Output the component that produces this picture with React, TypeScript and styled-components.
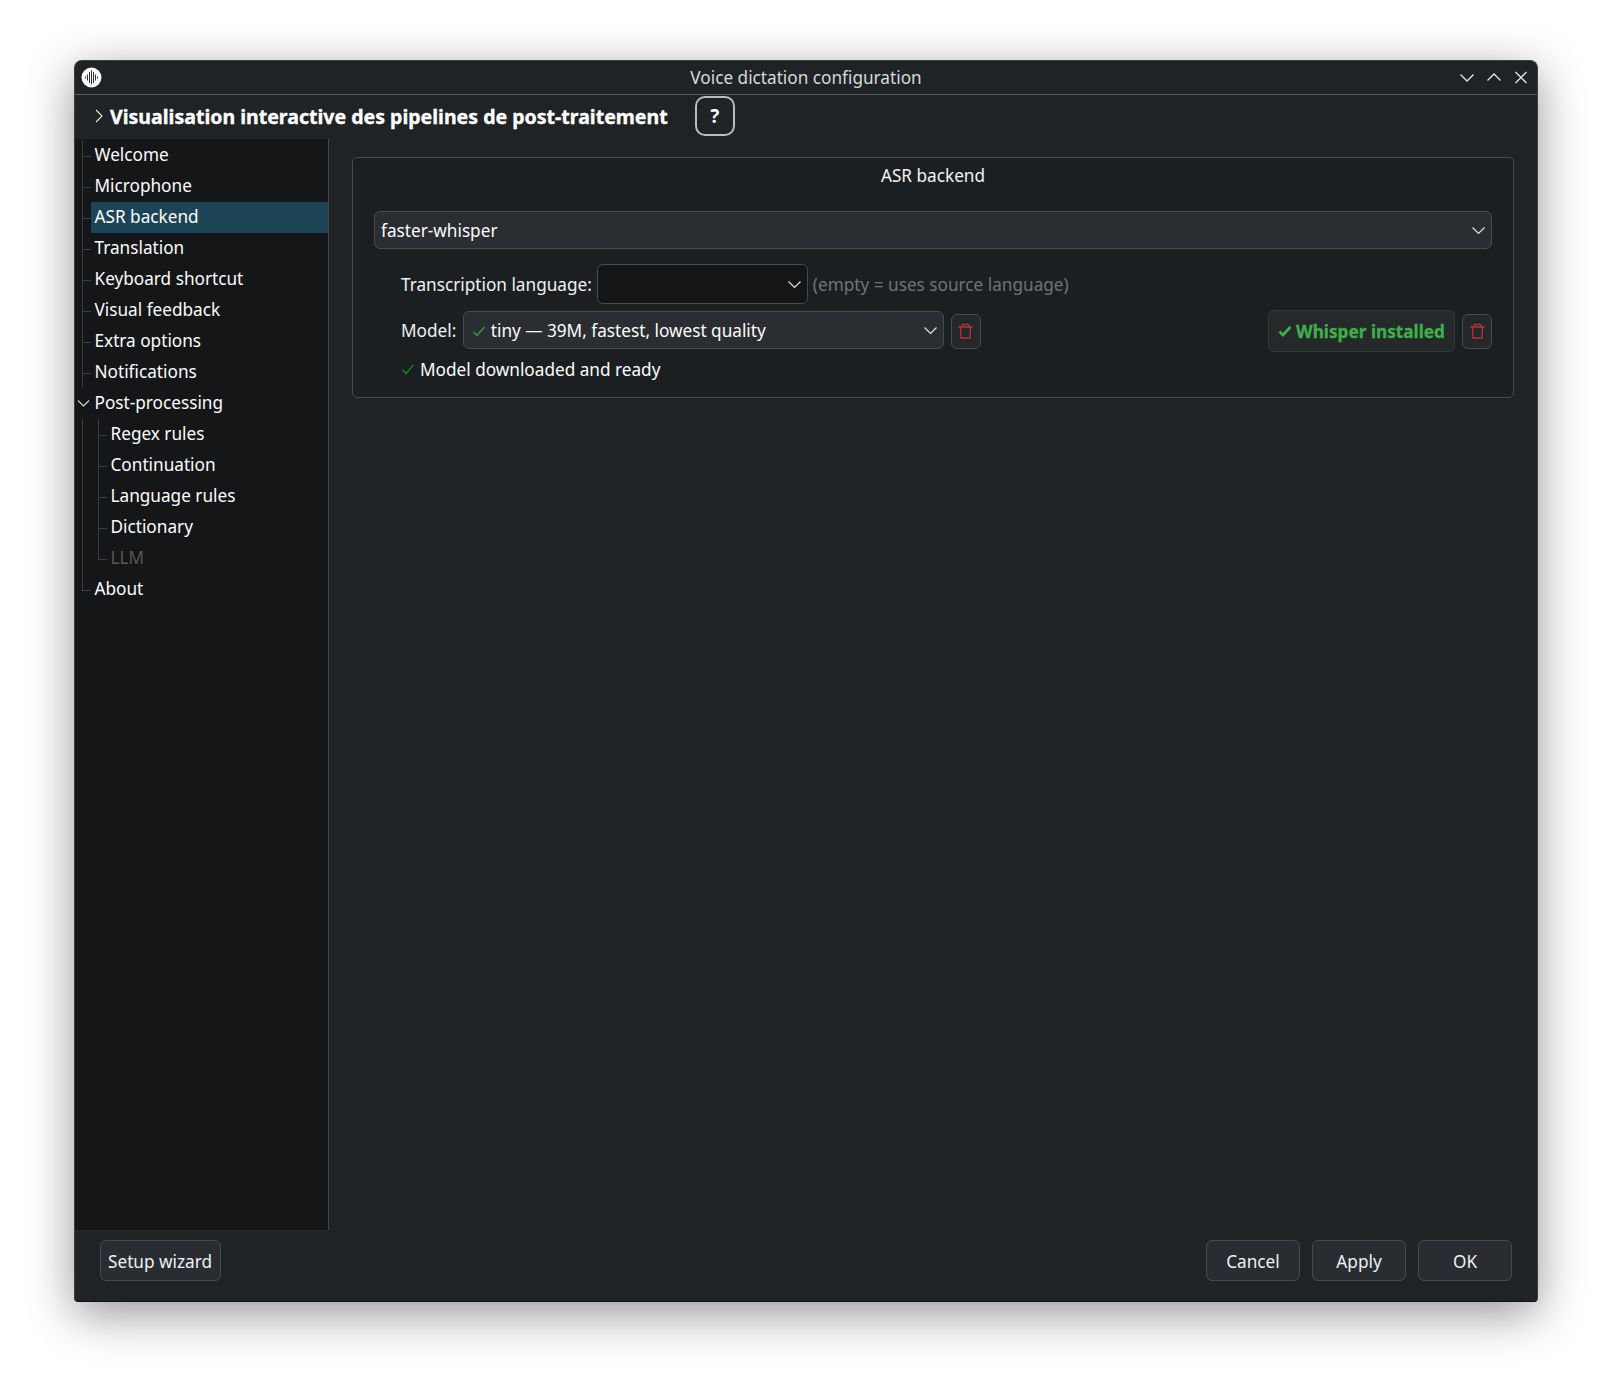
import styled, { createGlobalStyle } from 'styled-components';

const GlobalStyle = createGlobalStyle`
  html, body {
    margin: 0;
    padding: 0;
    background: #ffffff;
  }
  body {
    width: 1611px;
    height: 1391px;
    overflow: hidden;
    font-family: "Noto Sans", "Open Sans", sans-serif;
    font-size: 17.2px;
    color: #fcfcfc;
  }
`;

const Page = styled.div`
  width: 1611px;
  height: 1391px;
  padding: 60px 0 0 74px;
  box-sizing: border-box;
`;

const Window = styled.div`
  width: 1464px;
  height: 1242px;
  box-sizing: border-box;
  display: flex;
  flex-direction: column;
  background: #202326;
  border: 1px solid #3c3f42;
  border-bottom-color: #101214;
  border-radius: 8px 8px 4px 4px;
  box-shadow: 0 12px 48px rgba(0, 0, 0, 0.42);
  overflow: hidden;
`;

const TitleBar = styled.div`
  height: 34px;
  flex: none;
  box-sizing: border-box;
  padding-bottom: 1px;
  display: flex;
  align-items: center;
  justify-content: center;
  position: relative;
  border-bottom: 1px solid #585b5e;
  color: #d8d9d9;
`;

const AppIcon = styled.svg`
  position: absolute;
  left: 6px;
  top: 6px;
  width: 21px;
  height: 21px;
`;

const WindowControls = styled.div`
  position: absolute;
  right: 2px;
  top: 0;
  height: 33px;
  display: flex;
  align-items: center;
  gap: 13px;
  padding-right: 7px;
`;

const WindowIcon = styled.svg`
  width: 14px;
  height: 15px;
  stroke: #e6e6e6;
  stroke-width: 1.25;
  fill: none;
`;

const SectionHeader = styled.div`
  height: 44px;
  flex: none;
  box-sizing: border-box;
  padding: 0 0 2px 18px;
  display: flex;
  align-items: center;
`;

const SectionArrow = styled.svg`
  width: 12px;
  height: 14px;
  stroke: #e6e6e6;
  stroke-width: 1.1;
  fill: none;
`;

const SectionTitle = styled.span`
  margin-left: 5px;
  font-size: 19.55px;
  font-weight: 700;
  color: #ffffff;
  -webkit-text-stroke: 0.35px #ffffff;
`;

const HelpButton = styled.div`
  width: 40px;
  height: 40px;
  margin-left: 27px;
  box-sizing: border-box;
  display: flex;
  align-items: center;
  justify-content: center;
  border: 2px solid #bcbcbc;
  border-radius: 10px;
  font-weight: 700;
  font-size: 19px;
`;

const Body = styled.div`
  flex: 1;
  min-height: 0;
  display: flex;
`;

const Sidebar = styled.div`
  width: 254px;
  flex: none;
  box-sizing: border-box;
  padding-top: 1px;
  background: #141618;
  border-right: 1px solid #46494c;
`;

const TreeRow = styled.div<{ $level?: number; $selected?: boolean; $disabled?: boolean; $last?: boolean; $open?: boolean }>`
  height: 31px;
  display: flex;
  align-items: center;
  position: relative;
  box-sizing: border-box;
  padding-bottom: 2px;
  margin-left: ${p => (p.$selected ? '16px' : '0')};
  padding-left: ${p => (p.$selected ? '3.5px' : p.$level ? '35.5px' : '19.5px')};
  background: ${p => (p.$selected ? '#1d4357' : 'transparent')};
  color: ${p => (p.$disabled ? '#55585a' : '#fcfcfc')};

  &::before {
    content: '';
    position: absolute;
    left: ${p => (p.$selected ? '-9px' : p.$level ? '23px' : '7px')};
    top: 0;
    bottom: ${p => (p.$last ? '50%' : p.$open ? '19px' : '0')};
    border-left: 1px solid #3a3d40;
    display: ${p => (p.$open ? 'none' : 'block')};
  }

  &::after {
    content: '';
    position: absolute;
    left: ${p => (p.$selected ? '-9px' : p.$level ? '23px' : '7px')};
    width: 9px;
    top: 50%;
    border-top: 1px solid #3a3d40;
    display: ${p => (p.$open ? 'none' : 'block')};
  }
`;

const TreeChevron = styled.svg`
  position: absolute;
  left: 2px;
  top: 9px;
  width: 13px;
  height: 13px;
  stroke: #d8d8d8;
  stroke-width: 1.1;
  fill: none;
`;

const TrunkLine = styled.div`
  position: absolute;
  left: 7px;
  top: 0;
  bottom: 0;
  border-left: 1px solid #3a3d40;
`;

const Content = styled.div`
  flex: 1;
  min-width: 0;
  padding: 18px 23px 0 23px;
`;

const GroupBox = styled.div`
  height: 241px;
  box-sizing: border-box;
  padding: 6px 21px 0 21px;
  background: #1c1f22;
  border: 1px solid #484b4e;
  border-radius: 5px;
`;

const GroupTitle = styled.div`
  height: 24px;
  line-height: 24px;
  text-align: center;
  color: #f2f2f2;
`;

const Combo = styled.div<{ $width?: number; $dark?: boolean; $height?: number }>`
  display: flex;
  align-items: center;
  justify-content: space-between;
  box-sizing: border-box;
  width: ${p => (p.$width ? `${p.$width}px` : '100%')};
  height: ${p => p.$height || 38}px;
  flex: none;
  padding: 0 5px 0 6px;
  background: ${p => (p.$dark ? '#141517' : '#2a2d31')};
  border: 1px solid #484b4e;
  border-radius: 6px;
`;

const BackendCombo = styled(Combo)`
  margin-top: 23px;
`;

const ComboValue = styled.span`
  display: flex;
  align-items: center;
  gap: 5px;
  padding-top: 1px;
`;

const ComboArrow = styled.svg`
  width: 15px;
  height: 15px;
  stroke: #e2e2e2;
  stroke-width: 1.2;
  fill: none;
`;

const LanguageRow = styled.div`
  display: flex;
  align-items: center;
  margin: 15px 0 0 27px;
  height: 40px;
`;

const FieldLabel = styled.span<{ $gap: number; $drop?: boolean }>`
  color: #eff0f1;
  margin-right: ${p => p.$gap}px;
  padding-top: ${p => (p.$drop ? '1px' : '0')};
`;

const Hint = styled.span`
  color: #707376;
  margin-left: 5px;
`;

const ModelRow = styled.div`
  display: flex;
  align-items: center;
  margin: 7px 0 0 27px;
  height: 38px;
`;

const TrashButton = styled.div`
  width: 30px;
  height: 35px;
  flex: none;
  box-sizing: border-box;
  margin: 2px 0 0 7px;
  display: flex;
  align-items: center;
  justify-content: center;
  background: #25282b;
  border: 1px solid #484b4e;
  border-radius: 6px;
`;

const TrashIcon = styled.svg`
  width: 15px;
  height: 16px;
  stroke: #b5303f;
  stroke-width: 1.3;
  fill: none;
`;

const InstalledBadge = styled.div`
  height: 42px;
  width: 187px;
  margin: 2px 0 0 auto;
  box-sizing: border-box;
  display: flex;
  align-items: center;
  justify-content: center;
  gap: 4px;
  background: #25292b;
  border: 1px solid #2a3f2e;
  border-radius: 6px;
  color: #3fae49;
  font-weight: 700;
  -webkit-text-stroke: 0.3px #3fae49;
`;

const StatusRow = styled.div`
  display: flex;
  align-items: center;
  gap: 5px;
  margin: 6px 0 0 27px;
  height: 28px;
`;

const CheckIcon = styled.svg<{ $color: string; $weight?: number; $indent?: number }>`
  width: 14px;
  height: 14px;
  margin-left: ${p => p.$indent || 0}px;
  stroke: ${p => p.$color};
  stroke-width: ${p => p.$weight || 1.4};
  fill: none;
  flex: none;
`;

const Footer = styled.div`
  height: 71px;
  flex: none;
  box-sizing: border-box;
  display: flex;
  align-items: flex-start;
  padding: 10px 25px 0 24.5px;
`;

const PushButton = styled.div<{ $wide?: boolean }>`
  width: ${p => (p.$wide ? '121px' : '94px')};
  height: 41px;
  box-sizing: border-box;
  padding-top: 1px;
  display: flex;
  align-items: center;
  justify-content: center;
  background: #292c30;
  border: 1px solid #484b4e;
  border-radius: 6px;
  color: #eff0f1;
`;

const ButtonGroup = styled.div`
  margin-left: auto;
  display: flex;
  gap: 12px;
`;

const Chevron = () => (
  <ComboArrow viewBox="0 0 15 15">
    <path d="M1.5 4.5 L7.5 10.5 L13.5 4.5" />
  </ComboArrow>
);

const Trash = () => (
  <TrashIcon viewBox="0 0 15 16">
    <path d="M0.5 4 H14.5 M4 4 L4.5 1.5 H10.5 L11 4 M2.5 4 L3 15 H12 L12.5 4" />
  </TrashIcon>
);

const topItems = ['Welcome', 'Microphone', 'ASR backend', 'Translation', 'Keyboard shortcut', 'Visual feedback', 'Extra options', 'Notifications'];
const subItems = ['Regex rules', 'Continuation', 'Language rules', 'Dictionary', 'LLM'];
const waveBars = [9.5, 7.5, 5, 3.5, 5, 7.5, 9.5];

const App = () => (
  <>
    <GlobalStyle />
    <Page>
      <Window>
        <TitleBar>
          <AppIcon viewBox="0 0 21 21">
            <circle cx="10.5" cy="10.5" r="10" fill="#f8f8f8" />
            {waveBars.map((y, i) => (
              <path key={i} d={`M${4.5 + i * 2} ${y} V${21 - y}`} stroke="#2c2f33" strokeWidth="1" />
            ))}
          </AppIcon>
          Voice dictation configuration
          <WindowControls>
            <WindowIcon viewBox="0 0 14 15">
              <path d="M0.5 4.5 L7 11 L13.5 4.5" />
            </WindowIcon>
            <WindowIcon viewBox="0 0 14 15">
              <path d="M0.5 10.5 L7 4 L13.5 10.5" />
            </WindowIcon>
            <WindowIcon viewBox="0 0 14 15">
              <path d="M1.5 2 L12.5 13 M12.5 2 L1.5 13" />
            </WindowIcon>
          </WindowControls>
        </TitleBar>
        <SectionHeader>
          <SectionArrow viewBox="0 0 12 14">
            <path d="M3 1 L9 7 L3 13" />
          </SectionArrow>
          <SectionTitle>Visualisation interactive des pipelines de post-traitement</SectionTitle>
          <HelpButton>?</HelpButton>
        </SectionHeader>
        <Body>
          <Sidebar>
            {topItems.map(item => (
              <TreeRow key={item} $selected={item === 'ASR backend'}>
                {item}
              </TreeRow>
            ))}
            <TreeRow $open>
              <TreeChevron viewBox="0 0 13 13">
                <path d="M1 3.5 L6.5 9 L12 3.5" />
              </TreeChevron>
              Post-processing
            </TreeRow>
            {subItems.map(item => (
              <TreeRow key={item} $level={1} $disabled={item === 'LLM'} $last={item === 'LLM'}>
                <TrunkLine />
                {item}
              </TreeRow>
            ))}
            <TreeRow $last>About</TreeRow>
          </Sidebar>
          <Content>
            <GroupBox>
              <GroupTitle>ASR backend</GroupTitle>
              <BackendCombo>
                <span>faster-whisper</span>
                <Chevron />
              </BackendCombo>
              <LanguageRow>
                <FieldLabel $gap={5}>Transcription language:</FieldLabel>
                <Combo $width={211} $dark $height={40}>
                  <span />
                  <Chevron />
                </Combo>
                <Hint>(empty = uses source language)</Hint>
              </LanguageRow>
              <ModelRow>
                <FieldLabel $gap={6.5} $drop>Model:</FieldLabel>
                <Combo $width={481}>
                  <ComboValue>
                    <CheckIcon $color="#3a9a45" $indent={2} viewBox="0 0 14 14">
                      <path d="M1.5 8 L5 11.5 L12.5 3" />
                    </CheckIcon>
                    tiny — 39M, fastest, lowest quality
                  </ComboValue>
                  <Chevron />
                </Combo>
                <TrashButton>
                  <Trash />
                </TrashButton>
                <InstalledBadge>
                  <CheckIcon $color="#3fae49" $weight={2.8} viewBox="0 0 14 14">
                    <path d="M1.5 7.5 L5 11 L12.5 3" />
                  </CheckIcon>
                  Whisper installed
                </InstalledBadge>
                <TrashButton>
                  <Trash />
                </TrashButton>
              </ModelRow>
              <StatusRow>
                <CheckIcon $color="#118a1a" viewBox="0 0 14 14">
                  <path d="M1.5 8 L5 11.5 L12.5 3" />
                </CheckIcon>
                Model downloaded and ready
              </StatusRow>
            </GroupBox>
          </Content>
        </Body>
        <Footer>
          <PushButton $wide>Setup wizard</PushButton>
          <ButtonGroup>
            <PushButton>Cancel</PushButton>
            <PushButton>Apply</PushButton>
            <PushButton>OK</PushButton>
          </ButtonGroup>
        </Footer>
      </Window>
    </Page>
  </>
);

export default App;
